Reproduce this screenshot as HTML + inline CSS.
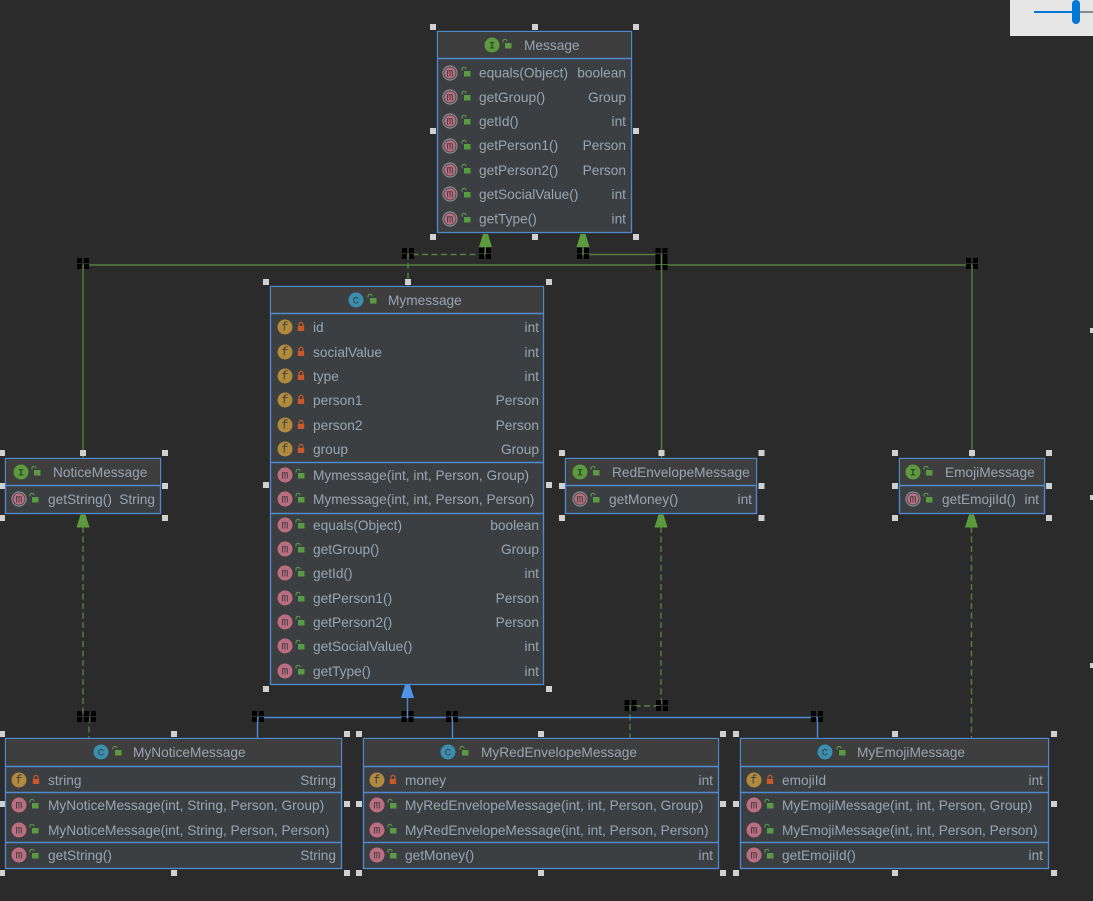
<!DOCTYPE html>
<html><head><meta charset="utf-8">
<style>
html,body{margin:0;padding:0;background:#2b2b2b;width:1093px;height:901px;overflow:hidden}
svg{display:block;position:absolute;left:0;top:0;filter:blur(.35px)}
text{font-family:"Liberation Sans",sans-serif;font-size:13.7px;fill:#98a5b2}
.e{text-anchor:end}
.i{text-anchor:middle;font-size:11.500px;fill:#3d3f41;font-family:"Liberation Mono",monospace}
.ii{font-weight:bold;font-size:10px;fill:#2f4a28}
.b{fill:#3c3f41;stroke:#4d8ad0;stroke-width:1.3}
.h{fill:#3e3e3e}
.s{stroke:#4d8ad0;stroke-width:1.4;fill:none}
.g{stroke:#56803f;stroke-width:1.4;fill:none}
.d{stroke:#56803f;stroke-width:1.4;fill:none;stroke-dasharray:6 3.5}
.u{stroke:#4d8ad0;stroke-width:1.4;fill:none}
</style></head><body>
<svg width="1093" height="901" viewBox="0 0 1093 901" xmlns="http://www.w3.org/2000/svg">
<defs>
<g id="lo"><path d="M-3.5 -3 V-4.2 a2 2 0 0 1 4 0" fill="none" stroke="#5a9a42" stroke-width="1.2" transform="translate(-.5 .5)"/><rect x="-2" y="-2" width="6.5" height="5.5" fill="#5a9a42"/></g>
<g id="lc"><path d="M-2 -1 V-2.6 a2 2 0 0 1 4 0 V-1" fill="none" stroke="#c9582b" stroke-width="1.2"/><rect x="-3.2" y="-1" width="6.4" height="5" fill="#c9582b"/></g>
<g id="ci"><circle r="7.5" fill="#5c9a3e"/></g>
<g id="cc"><circle r="7.5" fill="#3a8fae"/></g>
<g id="cf"><circle r="7.5" fill="#b28a3e"/></g>
<g id="cm"><circle r="7.5" fill="#bd6d80"/></g>
<g id="ca"><circle r="7" fill="none" stroke="#8a8d90" stroke-width="1.2"/><circle r="5.6" fill="#bd6d80"/></g>
<g id="w"><rect x="-3" y="-3" width="6" height="6" fill="#d0d0d0"/></g>
<g id="k"><rect x="-6" y="-6" width="5" height="5" fill="#000"/><rect x="1" y="-6" width="5" height="5" fill="#000"/><rect x="-6" y="0" width="5" height="5" fill="#000"/><rect x="1" y="0" width="5" height="5" fill="#000"/></g>
<path id="ag" d="M-2.500 0 H2.500 L6.500 13 H-6.500 Z" fill="#5c9a3e"/>
<path id="ab" d="M-2.500 0 H2.500 L6.500 13 H-6.500 Z" fill="#4d94e8"/>
</defs>

<rect width="1093" height="901" fill="#2b2b2b"/>

<!-- connectors -->
<path class="g" d="M83 265H972M83 265V458M972 265V458M661.500 254V458M583 247V254.500H661.500"/>
<path class="g" d="M485.500 245V254"/>
<path class="d" d="M485 254.500H408V286"/>
<path class="d" d="M83 527V717M89 717V738"/>
<path class="d" d="M661 527V706H630V738"/>
<path class="d" d="M971.500 527V738"/>
<path class="u" d="M407.500 697V717.500M257.500 717.500H817.500M257.500 717.500V738M452.500 717.500V738M817.500 717.500V738"/>

<use href="#k" x="83" y="264"/><use href="#k" x="408" y="254"/><use href="#k" x="485" y="254"/><use href="#k" x="583" y="254"/><use href="#k" x="661.500" y="254"/><use href="#k" x="661.500" y="265"/><use href="#k" x="972" y="264"/>
<use href="#k" x="83" y="717"/><use href="#k" x="90" y="717"/><use href="#k" x="258" y="717"/><use href="#k" x="407.500" y="717"/><use href="#k" x="452" y="717"/><use href="#k" x="817" y="717"/><use href="#k" x="630.500" y="706"/><use href="#k" x="662" y="706"/>

<!-- white handles -->
<use href="#w" x="433" y="27"/><use href="#w" x="535" y="27"/><use href="#w" x="636" y="27"/><use href="#w" x="433" y="131"/><use href="#w" x="636" y="131"/><use href="#w" x="433" y="237"/><use href="#w" x="535" y="237"/><use href="#w" x="636" y="237"/>
<use href="#w" x="266" y="282"/><use href="#w" x="408" y="282"/><use href="#w" x="549" y="282"/><use href="#w" x="266" y="485"/><use href="#w" x="549" y="485"/><use href="#w" x="266" y="689"/><use href="#w" x="549" y="689"/>
<use href="#w" x="2" y="453"/><use href="#w" x="83" y="453"/><use href="#w" x="165" y="453"/><use href="#w" x="2" y="486"/><use href="#w" x="165" y="486"/><use href="#w" x="2" y="518"/><use href="#w" x="165" y="518"/>
<use href="#w" x="562" y="453"/><use href="#w" x="661.500" y="453"/><use href="#w" x="761.500" y="453"/><use href="#w" x="562" y="486"/><use href="#w" x="761.500" y="486"/><use href="#w" x="562" y="518"/><use href="#w" x="761.500" y="518"/>
<use href="#w" x="895" y="453"/><use href="#w" x="972" y="453"/><use href="#w" x="1049" y="453"/><use href="#w" x="895" y="486"/><use href="#w" x="1049" y="486"/><use href="#w" x="895" y="518"/><use href="#w" x="1049" y="518"/>
<use href="#w" x="2" y="734"/><use href="#w" x="174" y="734"/><use href="#w" x="347" y="734"/><use href="#w" x="2" y="804"/><use href="#w" x="347" y="804"/><use href="#w" x="2" y="873"/><use href="#w" x="174" y="873"/><use href="#w" x="347" y="873"/>
<use href="#w" x="359" y="734"/><use href="#w" x="541" y="734"/><use href="#w" x="723" y="734"/><use href="#w" x="359" y="804"/><use href="#w" x="723" y="804"/><use href="#w" x="359" y="873"/><use href="#w" x="541" y="873"/><use href="#w" x="723" y="873"/>
<use href="#w" x="736" y="734"/><use href="#w" x="895" y="734"/><use href="#w" x="1054" y="734"/><use href="#w" x="736" y="804"/><use href="#w" x="1054" y="804"/><use href="#w" x="736" y="873"/><use href="#w" x="895" y="873"/><use href="#w" x="1054" y="873"/>
<rect x="1090" y="328" width="3" height="5" fill="#d0d0d0"/><rect x="1090" y="495" width="3" height="5" fill="#d0d0d0"/><rect x="1090" y="663" width="3" height="5" fill="#d0d0d0"/>

<!-- arrowheads -->
<use href="#ag" x="485.500" y="234"/><use href="#ag" x="583" y="234"/>
<use href="#ag" x="83" y="514.500"/><use href="#ag" x="661" y="514.500"/><use href="#ag" x="971.500" y="514.500"/>
<use href="#ab" x="407.500" y="685"/>

<!-- Message -->
<rect class="b" x="437.500" y="31.500" width="194" height="201"/>
<rect class="h" x="438" y="32" width="193" height="26"/>
<path class="s" d="M438 58.500H631"/>
<use href="#ci" x="492" y="45"/><text class="i ii" x="492" y="48.500">I</text><use href="#lo" x="507" y="45"/><text x="524" y="50">Message</text>
<use href="#ca" x="450" y="73"/><text class="i" x="450" y="76.500">m</text><use href="#lo" x="466" y="73"/><text x="479" y="77.500">equals(Object)</text><text class="e" x="626" y="77.500">boolean</text>
<use href="#ca" x="450" y="97"/><text class="i" x="450" y="100.500">m</text><use href="#lo" x="466" y="97"/><text x="479" y="102">getGroup()</text><text class="e" x="626" y="102">Group</text>
<use href="#ca" x="450" y="121"/><text class="i" x="450" y="124.500">m</text><use href="#lo" x="466" y="121"/><text x="479" y="126">getId()</text><text class="e" x="626" y="126">int</text>
<use href="#ca" x="450" y="146"/><text class="i" x="450" y="149.500">m</text><use href="#lo" x="466" y="146"/><text x="479" y="150">getPerson1()</text><text class="e" x="626" y="150">Person</text>
<use href="#ca" x="450" y="170"/><text class="i" x="450" y="173.500">m</text><use href="#lo" x="466" y="170"/><text x="479" y="175">getPerson2()</text><text class="e" x="626" y="175">Person</text>
<use href="#ca" x="450" y="194"/><text class="i" x="450" y="197.500">m</text><use href="#lo" x="466" y="194"/><text x="479" y="199">getSocialValue()</text><text class="e" x="626" y="199">int</text>
<use href="#ca" x="450" y="219"/><text class="i" x="450" y="222.500">m</text><use href="#lo" x="466" y="219"/><text x="479" y="223.500">getType()</text><text class="e" x="626" y="223.500">int</text>

<!-- Mymessage -->
<rect class="b" x="270.500" y="286.500" width="273" height="398"/>
<rect class="h" x="271" y="287" width="272" height="26"/>
<path class="s" d="M271 313.500H543M271 462.500H543M271 513.500H543"/>
<use href="#cc" x="356" y="300"/><text class="i" x="356" y="303.500">c</text><use href="#lo" x="372" y="300"/><text x="388" y="305">Mymessage</text>
<use href="#cf" x="285" y="327"/><text class="i" x="285" y="330.500">f</text><use href="#lc" x="301" y="327"/><text x="313" y="332">id</text><text class="e" x="539" y="332">int</text>
<use href="#cf" x="285" y="352"/><text class="i" x="285" y="355.500">f</text><use href="#lc" x="301" y="352"/><text x="313" y="357">socialValue</text><text class="e" x="539" y="357">int</text>
<use href="#cf" x="285" y="376"/><text class="i" x="285" y="379.500">f</text><use href="#lc" x="301" y="376"/><text x="313" y="381">type</text><text class="e" x="539" y="381">int</text>
<use href="#cf" x="285" y="400"/><text class="i" x="285" y="403.500">f</text><use href="#lc" x="301" y="400"/><text x="313" y="405">person1</text><text class="e" x="539" y="405">Person</text>
<use href="#cf" x="285" y="425"/><text class="i" x="285" y="428.500">f</text><use href="#lc" x="301" y="425"/><text x="313" y="430">person2</text><text class="e" x="539" y="430">Person</text>
<use href="#cf" x="285" y="449"/><text class="i" x="285" y="452.500">f</text><use href="#lc" x="301" y="449"/><text x="313" y="454">group</text><text class="e" x="539" y="454">Group</text>
<use href="#cm" x="285" y="475"/><text class="i" x="285" y="478.500">m</text><use href="#lo" x="300" y="475"/><text x="313" y="480">Mymessage(int, int, Person, Group)</text>
<use href="#cm" x="285" y="499"/><text class="i" x="285" y="502.500">m</text><use href="#lo" x="300" y="499"/><text x="313" y="504">Mymessage(int, int, Person, Person)</text>
<use href="#cm" x="285" y="525"/><text class="i" x="285" y="528.500">m</text><use href="#lo" x="300" y="525"/><text x="313" y="530">equals(Object)</text><text class="e" x="539" y="530">boolean</text>
<use href="#cm" x="285" y="549"/><text class="i" x="285" y="552.500">m</text><use href="#lo" x="300" y="549"/><text x="313" y="554">getGroup()</text><text class="e" x="539" y="554">Group</text>
<use href="#cm" x="285" y="573"/><text class="i" x="285" y="576.500">m</text><use href="#lo" x="300" y="573"/><text x="313" y="578">getId()</text><text class="e" x="539" y="578">int</text>
<use href="#cm" x="285" y="598"/><text class="i" x="285" y="601.500">m</text><use href="#lo" x="300" y="598"/><text x="313" y="603">getPerson1()</text><text class="e" x="539" y="603">Person</text>
<use href="#cm" x="285" y="622"/><text class="i" x="285" y="625.500">m</text><use href="#lo" x="300" y="622"/><text x="313" y="627">getPerson2()</text><text class="e" x="539" y="627">Person</text>
<use href="#cm" x="285" y="646"/><text class="i" x="285" y="649.500">m</text><use href="#lo" x="300" y="646"/><text x="313" y="651">getSocialValue()</text><text class="e" x="539" y="651">int</text>
<use href="#cm" x="285" y="671"/><text class="i" x="285" y="674.500">m</text><use href="#lo" x="300" y="671"/><text x="313" y="676">getType()</text><text class="e" x="539" y="676">int</text>

<!-- NoticeMessage -->
<rect class="b" x="5.500" y="458.500" width="155" height="55"/>
<rect class="h" x="6" y="459" width="154" height="26"/>
<path class="s" d="M6 485.500H160"/>
<use href="#ci" x="21" y="472"/><text class="i ii" x="21" y="475.500">I</text><use href="#lo" x="36" y="472"/><text x="53" y="477">NoticeMessage</text>
<use href="#ca" x="19" y="499"/><text class="i" x="19" y="502.500">m</text><use href="#lo" x="34" y="499"/><text x="48" y="504">getString()</text><text class="e" x="155" y="504">String</text>

<!-- RedEnvelopeMessage -->
<rect class="b" x="565.500" y="458.500" width="191" height="55"/>
<rect class="h" x="566" y="459" width="190" height="26"/>
<path class="s" d="M566 485.500H756"/>
<use href="#ci" x="580" y="472"/><text class="i ii" x="580" y="475.500">I</text><use href="#lo" x="595" y="472"/><text x="612" y="477">RedEnvelopeMessage</text>
<use href="#ca" x="580" y="499"/><text class="i" x="580" y="502.500">m</text><use href="#lo" x="595" y="499"/><text x="609" y="504">getMoney()</text><text class="e" x="752" y="504">int</text>

<!-- EmojiMessage -->
<rect class="b" x="899.500" y="458.500" width="145" height="55"/>
<rect class="h" x="900" y="459" width="144" height="26"/>
<path class="s" d="M900 485.500H1044"/>
<use href="#ci" x="913" y="472"/><text class="i ii" x="913" y="475.500">I</text><use href="#lo" x="928" y="472"/><text x="945" y="477">EmojiMessage</text>
<use href="#ca" x="913" y="499"/><text class="i" x="913" y="502.500">m</text><use href="#lo" x="928" y="499"/><text x="942" y="504">getEmojiId()</text><text class="e" x="1039" y="504">int</text>

<!-- MyNoticeMessage -->
<rect class="b" x="5.500" y="738.500" width="336" height="130"/>
<rect class="h" x="6" y="739" width="335" height="27"/>
<path class="s" d="M6 766.500H341M6 792.500H341M6 842.500H341"/>
<use href="#cc" x="101" y="752"/><text class="i" x="101" y="755.500">c</text><use href="#lo" x="117" y="752"/><text x="133" y="757">MyNoticeMessage</text>
<use href="#cf" x="19" y="780"/><text class="i" x="19" y="783.500">f</text><use href="#lc" x="36" y="780"/><text x="48" y="785">string</text><text class="e" x="336" y="785">String</text>
<use href="#cm" x="19" y="805"/><text class="i" x="19" y="808.500">m</text><use href="#lo" x="34" y="805"/><text x="48" y="810">MyNoticeMessage(int, String, Person, Group)</text>
<use href="#cm" x="19" y="830"/><text class="i" x="19" y="833.500">m</text><use href="#lo" x="34" y="830"/><text x="48" y="835">MyNoticeMessage(int, String, Person, Person)</text>
<use href="#cm" x="19" y="855"/><text class="i" x="19" y="858.500">m</text><use href="#lo" x="34" y="855"/><text x="48" y="860">getString()</text><text class="e" x="336" y="860">String</text>

<!-- MyRedEnvelopeMessage -->
<rect class="b" x="363.500" y="738.500" width="355" height="130"/>
<rect class="h" x="364" y="739" width="354" height="27"/>
<path class="s" d="M364 766.500H718M364 792.500H718M364 842.500H718"/>
<use href="#cc" x="448" y="752"/><text class="i" x="448" y="755.500">c</text><use href="#lo" x="464" y="752"/><text x="481" y="757">MyRedEnvelopeMessage</text>
<use href="#cf" x="377" y="780"/><text class="i" x="377" y="783.500">f</text><use href="#lc" x="393" y="780"/><text x="405" y="785">money</text><text class="e" x="713" y="785">int</text>
<use href="#cm" x="377" y="805"/><text class="i" x="377" y="808.500">m</text><use href="#lo" x="392" y="805"/><text x="405" y="810">MyRedEnvelopeMessage(int, int, Person, Group)</text>
<use href="#cm" x="377" y="830"/><text class="i" x="377" y="833.500">m</text><use href="#lo" x="392" y="830"/><text x="405" y="835">MyRedEnvelopeMessage(int, int, Person, Person)</text>
<use href="#cm" x="377" y="855"/><text class="i" x="377" y="858.500">m</text><use href="#lo" x="392" y="855"/><text x="405" y="860">getMoney()</text><text class="e" x="713" y="860">int</text>

<!-- MyEmojiMessage -->
<rect class="b" x="740.500" y="738.500" width="308" height="130"/>
<rect class="h" x="741" y="739" width="307" height="27"/>
<path class="s" d="M741 766.500H1048M741 792.500H1048M741 842.500H1048"/>
<use href="#cc" x="825" y="752"/><text class="i" x="825" y="755.500">c</text><use href="#lo" x="841" y="752"/><text x="857" y="757">MyEmojiMessage</text>
<use href="#cf" x="754" y="780"/><text class="i" x="754" y="783.500">f</text><use href="#lc" x="770" y="780"/><text x="782" y="785">emojiId</text><text class="e" x="1043" y="785">int</text>
<use href="#cm" x="754" y="805"/><text class="i" x="754" y="808.500">m</text><use href="#lo" x="769" y="805"/><text x="782" y="810">MyEmojiMessage(int, int, Person, Group)</text>
<use href="#cm" x="754" y="830"/><text class="i" x="754" y="833.500">m</text><use href="#lo" x="769" y="830"/><text x="782" y="835">MyEmojiMessage(int, int, Person, Person)</text>
<use href="#cm" x="754" y="855"/><text class="i" x="754" y="858.500">m</text><use href="#lo" x="769" y="855"/><text x="782" y="860">getEmojiId()</text><text class="e" x="1043" y="860">int</text>

<!-- zoom slider -->
<rect x="1010" y="0" width="83" height="36" fill="#e6e6e6"/>
<rect x="1034" y="11" width="40" height="2" fill="#0078d7"/>
<rect x="1080" y="11" width="13" height="2" fill="#8a8a8a"/>
<rect x="1072" y="0" width="8" height="24" rx="4" fill="#0078d7"/>
</svg>
</body></html>
